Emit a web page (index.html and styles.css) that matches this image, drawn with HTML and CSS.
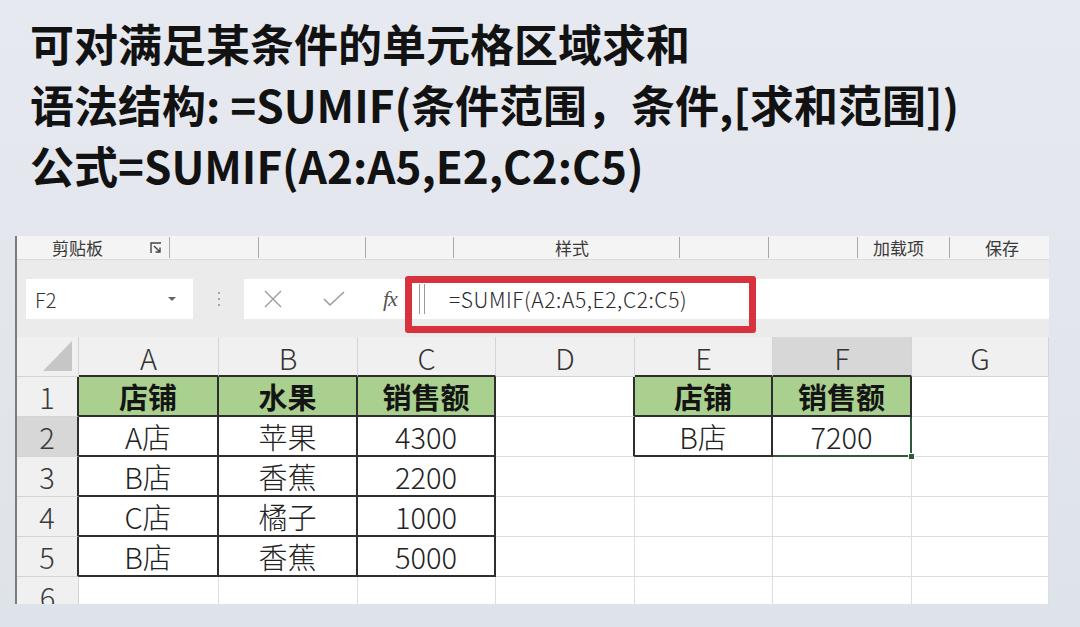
FILE: index.html
```html
<!DOCTYPE html>
<html lang="zh">
<head>
<meta charset="utf-8">
<title>SUMIF</title>
<link rel="stylesheet" href="styles.css">
</head>
<body>
<div class="title">
  <p>可对满足某条件的单元格区域求和</p>
  <p>语法结构: =SUMIF(条件范围，条件,[求和范围])</p>
  <p>公式=SUMIF(A2:A5,E2,C2:C5)</p>
</div>
<div class="panel">
  <div class="ribbon">
    <div class="seg s1"><span>剪贴板</span>
      <svg class="launch" width="12" height="12" viewBox="0 0 12 12"><path d="M1 11V1h10" fill="none" stroke="#444" stroke-width="1.4"/><path d="M4 4l6 6M10 5.5V10H5.5" fill="none" stroke="#444" stroke-width="1.4"/></svg>
    </div>
    <div class="seg s2"></div>
    <div class="seg s3"></div>
    <div class="seg s4"></div>
    <div class="seg s5"><span>样式</span></div>
    <div class="seg s6"></div>
    <div class="seg s7"></div>
    <div class="seg s8"><span>加载项</span></div>
    <div class="seg s9"><span>保存</span></div>
  </div>
  <div class="fbar">
    <div class="namebox"><span>F2</span>
      <svg width="10" height="6" viewBox="0 0 10 6"><path d="M1 1h8L5 5z" fill="#666"/></svg>
    </div>
    <div class="dots"><i></i><i></i><i></i></div>
    <div class="fxarea">
      <svg class="ico x" width="20" height="20" viewBox="0 0 20 20"><path d="M2 2l16 16M18 2L2 18" stroke="#9c9c9c" stroke-width="1.4" fill="none"/></svg>
      <svg class="ico ok" width="22" height="18" viewBox="0 0 22 18"><path d="M1 9l6 6L21 2" stroke="#9c9c9c" stroke-width="1.6" fill="none"/></svg>
      <span class="fx">fx</span>
      <span class="bars"></span>
      <span class="formula">=SUMIF(A2:A5,E2,C2:C5)</span>
    </div>
    <div class="redbox"></div>
  </div>
  <div class="grid">
    <div class="c h corner"><svg width="30" height="31" viewBox="0 0 30 31"><path d="M29 0V30H0z" fill="#c6c6c6"/></svg></div>
    <div class="c h B">A</div>
    <div class="c h B">B</div>
    <div class="c h B">C</div>
    <div class="c h">D</div>
    <div class="c h B">E</div>
    <div class="c h sel B">F</div>
    <div class="c h">G</div>

    <div class="c rh R">1</div>
    <div class="c g R B">店铺</div>
    <div class="c g R B">水果</div>
    <div class="c g R B">销售额</div>
    <div class="c R"></div>
    <div class="c g R B">店铺</div>
    <div class="c g R B">销售额</div>
    <div class="c"></div>

    <div class="c rh sel R">2</div>
    <div class="c R B">A店</div>
    <div class="c R B">苹果</div>
    <div class="c R B">4300</div>
    <div class="c R"></div>
    <div class="c R B">B店</div>
    <div class="c R B active">7200<span class="handle"></span></div>
    <div class="c"></div>

    <div class="c rh R">3</div>
    <div class="c R B">B店</div>
    <div class="c R B">香蕉</div>
    <div class="c R B">2200</div>
    <div class="c"></div>
    <div class="c"></div>
    <div class="c"></div>
    <div class="c"></div>

    <div class="c rh R">4</div>
    <div class="c R B">C店</div>
    <div class="c R B">橘子</div>
    <div class="c R B">1000</div>
    <div class="c"></div>
    <div class="c"></div>
    <div class="c"></div>
    <div class="c"></div>

    <div class="c rh R">5</div>
    <div class="c R B">B店</div>
    <div class="c R B">香蕉</div>
    <div class="c R B">5000</div>
    <div class="c"></div>
    <div class="c"></div>
    <div class="c"></div>
    <div class="c"></div>

    <div class="c rh">6</div>
    <div class="c"></div>
    <div class="c"></div>
    <div class="c"></div>
    <div class="c"></div>
    <div class="c"></div>
    <div class="c"></div>
    <div class="c"></div>
  </div>
</div>
</body>
</html>
```

FILE: styles.css
```css
* { box-sizing: border-box; }
html, body { margin: 0; padding: 0; }
body {
  width: 1080px;
  height: 627px;
  overflow: hidden;
  background: linear-gradient(180deg, #e6e9ef 0%, #e2e6ec 60%, #dde3e9 100%);
  font-family: "Noto Sans CJK SC", "Noto Sans", sans-serif;
}

.title {
  padding: 13px 0 0 30px;
  height: 236px;
}
.title p {
  margin: 0;
  font-size: 44px;
  line-height: 61px;
  font-weight: 700;
  color: #121212;
  white-space: nowrap;
}

.panel {
  margin-left: 15px;
  width: 1034px;
  height: 368px;
  border-left: 2px solid #7c7c7c;
  background: #fff;
  overflow: hidden;
  display: flex;
  flex-direction: column;
}

/* ribbon group labels */
.ribbon {
  height: 23px;
  background: #f4f4f4;
  display: flex;
  align-items: flex-start;
  padding-top: 1px;
  flex: none;
}
.seg {
  height: 21px;
  border-right: 1px solid #a8a8a8;
  display: flex;
  align-items: center;
  font-size: 17px;
  line-height: 21px;
  color: #3a3a3a;
  flex: none;
}
.s1 { width: 153px; padding-left: 35px; justify-content: space-between; padding-right: 7px; }
.s2 { width: 89px; }
.s3 { width: 107px; }
.s4 { width: 88px; }
.s5 { width: 226px; padding-left: 101px; }
.s6 { width: 89px; }
.s7 { width: 89px; }
.s8 { width: 92px; padding-left: 15px; }
.s9 { width: 99px; padding-left: 35px; border-right: none; }

/* formula bar */
.fbar {
  position: relative;
  height: 78px;
  flex: none;
  background: #ebebeb;
  border-top: 1px solid #dadada;
  display: flex;
  align-items: flex-start;
  padding-top: 19px;
}
.namebox {
  margin-left: 9px;
  width: 167px;
  height: 40px;
  background: #fff;
  display: flex;
  align-items: center;
  justify-content: space-between;
  padding: 0 16px 0 9px;
  font-size: 20px;
  font-weight: 300;
  color: #333;
}
.dots {
  width: 51px;
  height: 40px;
  display: flex;
  flex-direction: column;
  align-items: center;
  justify-content: center;
  gap: 4px;
}
.dots i {
  display: block;
  width: 2px;
  height: 2px;
  background: #a6a6a6;
}
.fxarea {
  flex: 1;
  height: 40px;
  background: #fff;
  display: flex;
  align-items: center;
  padding-left: 19px;
}
.ico.x { margin-right: 40px; }
.ico.ok { margin-right: 38px; }
.fx {
  font-family: "Liberation Serif", "DejaVu Serif", serif;
  font-style: italic;
  font-size: 22px;
  color: #555;
  margin-right: 22px;
  letter-spacing: -1px;
}
.bars {
  width: 6px;
  height: 30px;
  border-left: 1px solid #9a9a9a;
  border-right: 1px solid #9a9a9a;
  margin-right: 24px;
}
.formula {
  font-size: 21px;
  font-weight: 300;
  color: #2a2a2a;
  letter-spacing: 0.6px;
}
.redbox {
  position: absolute;
  left: 388px;
  top: 16px;
  width: 351px;
  height: 57px;
  border: 7px solid #d8323e;
  border-radius: 3px;
}

/* sheet grid */
.grid {
  display: grid;
  grid-template-columns: 62px 140px 139px 138px 139px 138px 139px 137px;
  grid-auto-rows: 40px;
  flex: none;
}
.c {
  border-right: 1px solid #dedede;
  border-bottom: 1px solid #dedede;
  display: flex;
  align-items: center;
  justify-content: center;
  font-size: 29px;
  font-weight: 300;
  line-height: 1;
  color: #222;
  background: #fff;
  white-space: nowrap;
}
.h {
  background: #f0f0f0;
  color: #333;
  border-color: #d4d4d4;
  padding-top: 2px;
}
.corner {
  justify-content: flex-end;
  align-items: flex-end;
  padding: 0 5px 4px 0;
}
.rh {
  background: #f0f0f0;
  color: #3a3a3a;
  border-color: #d4d4d4;
}
.sel { background: #d7d7d7; }
.g {
  background: #a9d08e;
  font-weight: 700;
  color: #141414;
}
.R { border-right: 2px solid #2e2e2e; }
.B { border-bottom: 2px solid #2e2e2e; }
.h.B { border-bottom: 2px solid #2e2e2e; }
.rh.R { border-right: 2px solid #2e2e2e; }
.active { position: relative; border-right-color: #2f5a3a; border-bottom-color: #2f5a3a; }
.handle {
  position: absolute;
  right: -5px;
  bottom: -5px;
  width: 7px;
  height: 7px;
  background: #2f5a3a;
  border: 1px solid #fff;
}
```
